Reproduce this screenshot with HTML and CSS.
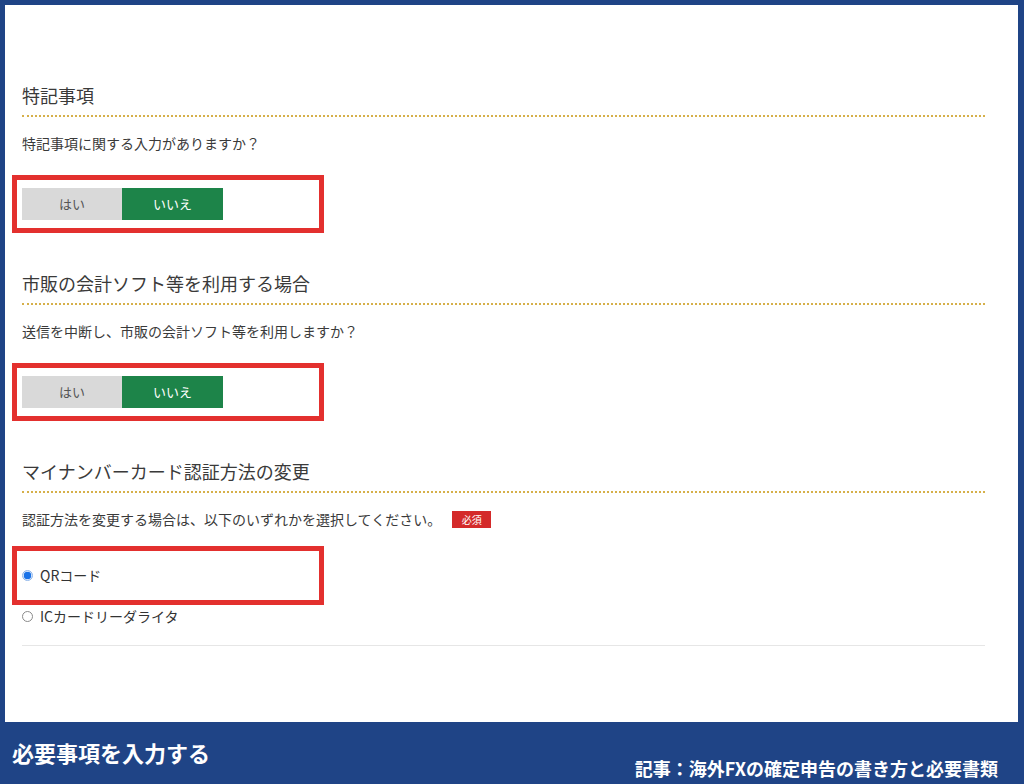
FILE: index.html
```html
<!DOCTYPE html>
<html lang="ja">
<head>
<meta charset="utf-8">
<link rel="stylesheet" href="styles.css">
</head>
<body>
<div class="panel">
  <section class="sec">
    <h2 class="sec-title">特記事項</h2>
    <p class="q">特記事項に関する入力がありますか？</p>
    <div class="mark">
      <div class="toggle">
        <span class="btn btn-off">はい</span>
        <span class="btn btn-on">いいえ</span>
      </div>
    </div>
  </section>
  <section class="sec">
    <h2 class="sec-title">市販の会計ソフト等を利用する場合</h2>
    <p class="q">送信を中断し、市販の会計ソフト等を利用しますか？</p>
    <div class="mark">
      <div class="toggle">
        <span class="btn btn-off">はい</span>
        <span class="btn btn-on">いいえ</span>
      </div>
    </div>
  </section>
  <section class="sec sec-last">
    <h2 class="sec-title">マイナンバーカード認証方法の変更</h2>
    <p class="q q-badge">認証方法を変更する場合は、以下のいずれかを選択してください。<span class="req">必須</span></p>
    <div class="mark mark-radio">
      <label class="radio"><span class="dot dot-on"></span>QRコード</label>
    </div>
    <label class="radio radio-2"><span class="dot"></span>ICカードリーダライタ</label>
    <div class="rule"></div>
  </section>
</div>
<footer class="foot">
  <div class="foot-left">必要事項を入力する</div>
  <div class="foot-right">記事：海外FXの確定申告の書き方と必要書類</div>
</footer>
</body>
</html>
```
FILE: styles.css
```css
html, body {
  margin: 0;
  padding: 0;
}
body {
  background: #1f4486;
  font-family: "Noto Sans CJK JP", "Noto Sans", sans-serif;
  color: #333;
  width: 1024px;
  height: 784px;
  overflow: hidden;
}
.panel {
  background: #fff;
  margin: 5px 6px 0 5px;
  height: 717px;
  box-sizing: border-box;
  padding: 77px 33px 0 17px;
}
.sec {
  margin-bottom: 37px;
}
.sec-title {
  margin: 0;
  font-size: 18px;
  font-weight: normal;
  line-height: 26px;
  color: #3a3a3a;
  padding-bottom: 7px;
  border-bottom: 2px dotted #d6b04a;
}
.q {
  margin: 16px 0 0 0;
  font-size: 14px;
  line-height: 20px;
  color: #3a3a3a;
  display: flex;
  align-items: center;
}
.req {
  display: inline-block;
  margin-left: 11px;
  background: #d42a2a;
  color: #fff;
  font-size: 10px;
  line-height: 17px;
  width: 39px;
  text-align: center;
}
.mark {
  margin: 22px 0 0 -10px;
  width: 312px;
  box-sizing: border-box;
  border: 5px solid #e3302e;
  padding: 8px 5px;
}
.toggle {
  display: flex;
}
.btn {
  width: 100px;
  height: 32px;
  line-height: 32px;
  text-align: center;
  font-size: 13px;
}
.btn-off {
  background: #d9d9d9;
  color: #555;
}
.btn-on {
  width: 101px;
  background: #1d8449;
  color: #fff;
}
.mark-radio {
  margin-top: 17px;
  padding: 14px 5px 15px 5px;
}
.radio {
  display: flex;
  align-items: center;
  font-size: 14px;
  line-height: 20px;
  color: #333;
}
.radio-2 {
  margin-top: 1px;
}
.dot {
  width: 9px;
  height: 9px;
  border-radius: 50%;
  border: 1px solid #8a8a8a;
  margin-right: 7px;
  box-sizing: content-box;
  background: #fff;
}
.dot-on {
  border-color: #8fb6ea;
  background: radial-gradient(circle, #1a73e8 0 3.5px, #cfe0f8 4px);
}
.rule {
  margin-top: 19px;
  border-top: 1px solid #e6e6e6;
}
.foot {
  height: 62px;
  display: flex;
  justify-content: space-between;
  align-items: flex-start;
  padding: 0 26px 0 12px;
  color: #fff;
  font-weight: bold;
}
.foot-left {
  font-size: 22px;
  line-height: 30px;
  margin-top: 15px;
}
.foot-right {
  font-size: 18px;
  line-height: 26px;
  margin-top: 33px;
}
```
